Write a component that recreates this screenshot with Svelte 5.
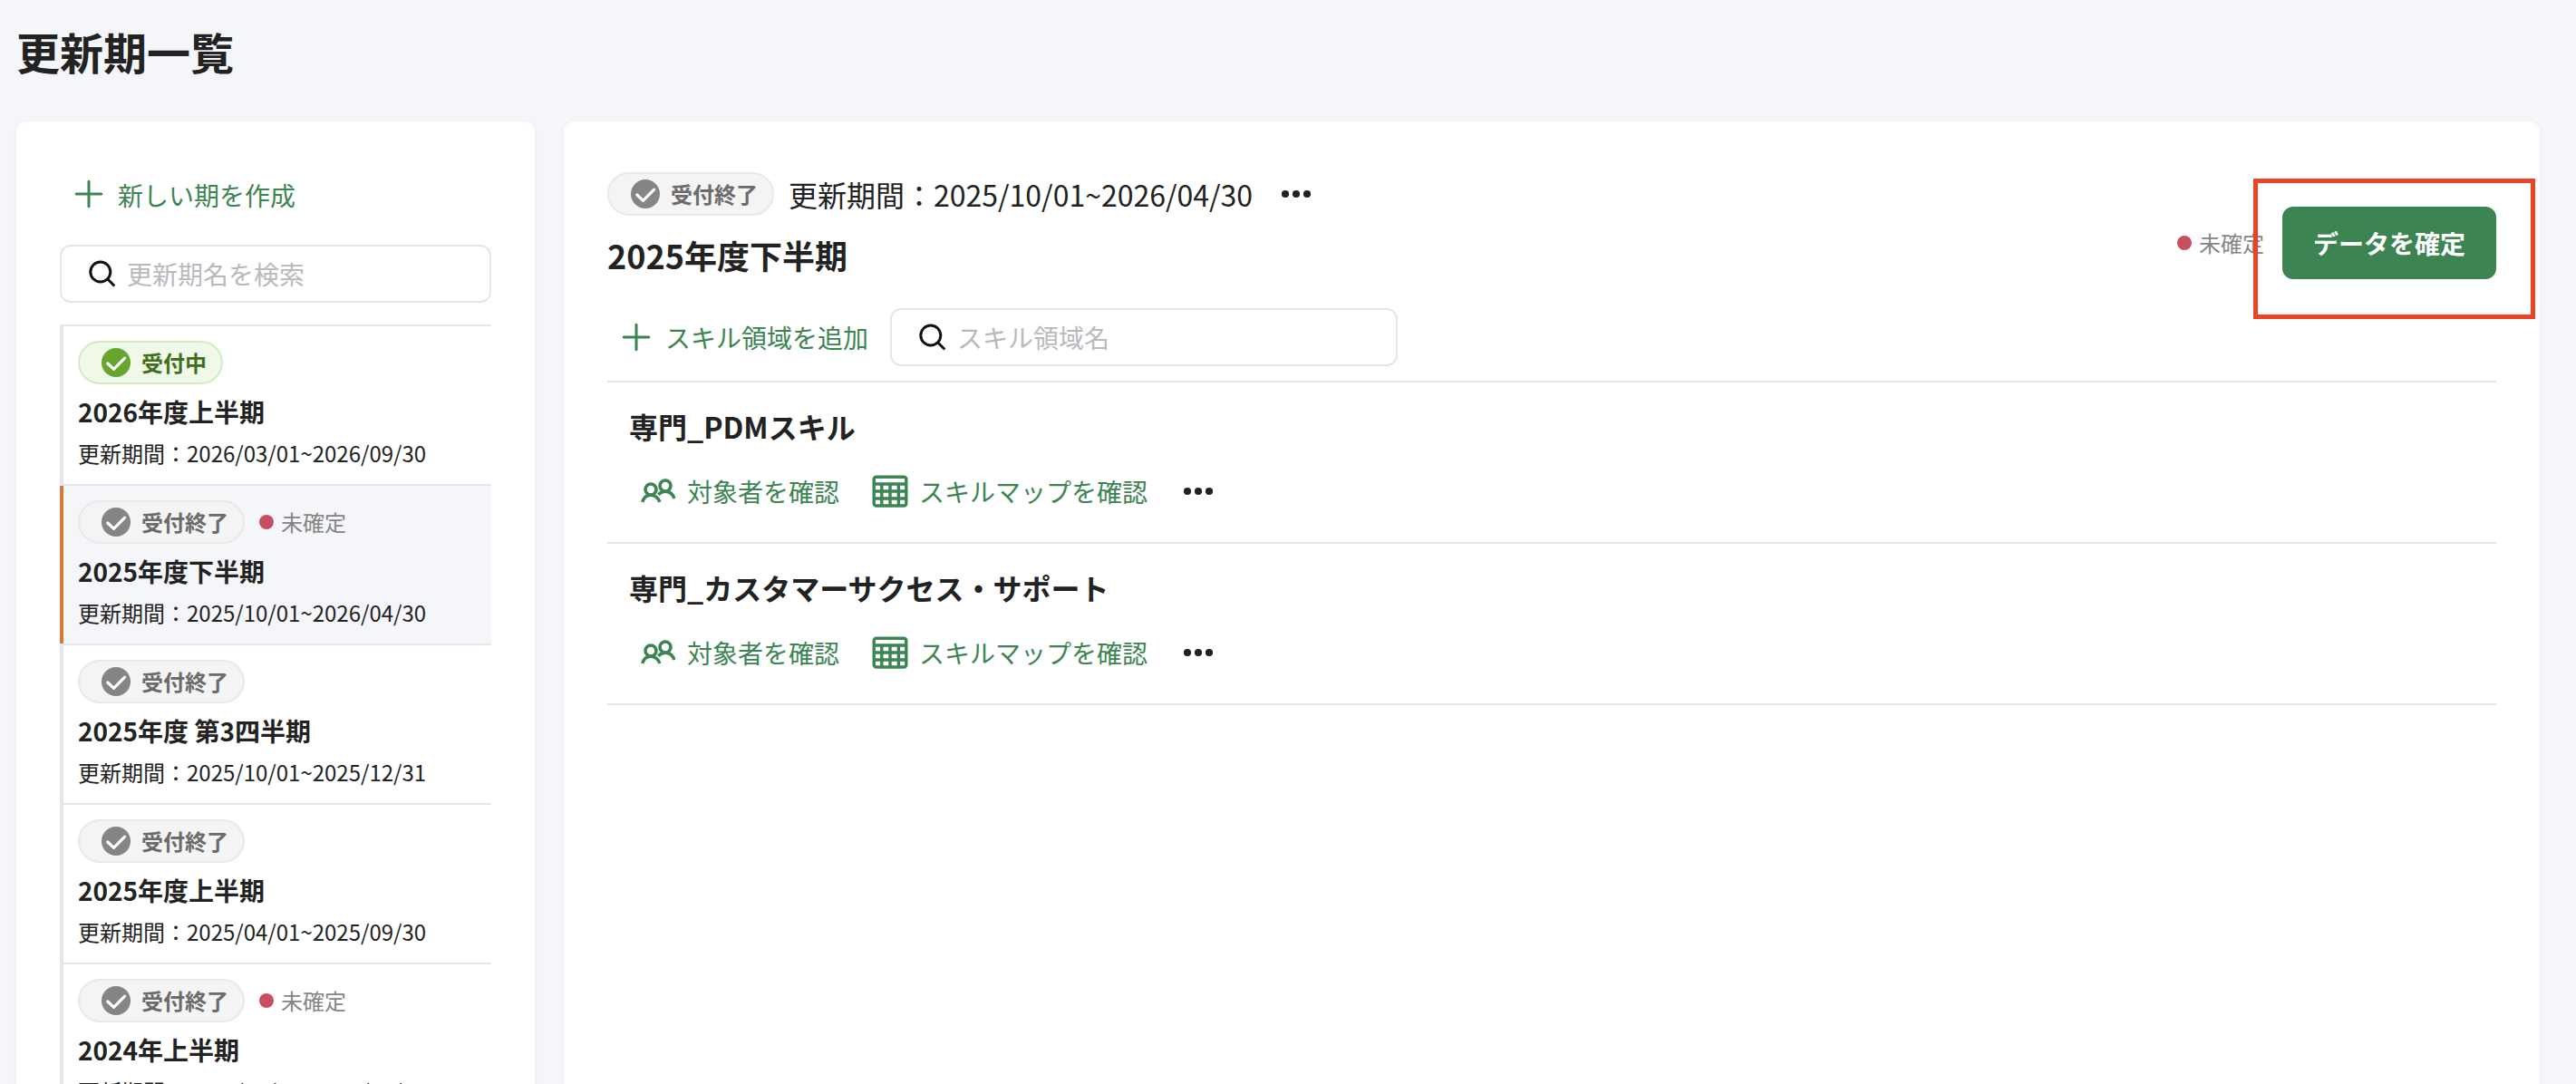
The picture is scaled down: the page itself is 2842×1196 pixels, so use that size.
<script>
  const periods = [
    { open: true, pending: false, name: '2026年度上半期', range: '2026/03/01~2026/09/30' },
    { open: false, pending: true, name: '2025年度下半期', range: '2025/10/01~2026/04/30', selected: true },
    { open: false, pending: false, name: '2025年度 第3四半期', range: '2025/10/01~2025/12/31' },
    { open: false, pending: false, name: '2025年度上半期', range: '2025/04/01~2025/09/30' },
    { open: false, pending: true, name: '2024年上半期', range: '2024/04/01~2024/09/30' }
  ];
  const current = periods[1];
  const areas = ['専門_PDMスキル', '専門_カスタマーサクセス・サポート'];
</script>

{#snippet badge(open)}
  <span class="badge" class:open>
    <svg class="check" viewBox="0 0 32 32"><circle cx="16" cy="16" r="16" /><path d="M6.8 17L13.5 23.4L25.6 11.2" /></svg>
    {open ? '受付中' : '受付終了'}
  </span>
{/snippet}

{#snippet pendingMark()}
  <span class="pending"><i></i>未確定</span>
{/snippet}

{#snippet plus()}
  <svg class="plus" viewBox="0 0 32 32"><path d="M16 2.2V29.8M2.2 16H29.8" /></svg>
{/snippet}

{#snippet magnifier()}
  <svg class="magnifier" viewBox="0 0 30 30"><circle cx="12.8" cy="13" r="11" /><path d="M20.8 21L28.3 28.5" /></svg>
{/snippet}

{#snippet dots()}
  <svg class="dots" viewBox="0 0 34 10"><circle cx="5" cy="5" r="4.1" /><circle cx="17" cy="5" r="4.1" /><circle cx="29" cy="5" r="4.1" /></svg>
{/snippet}

<div class="page">
  <h1>更新期一覧</h1>
  <div class="columns">
    <aside class="card side">
      <button class="link create">{@render plus()}<span>新しい期を作成</span></button>
      <label class="search">{@render magnifier()}<span>更新期名を検索</span></label>
      <ul class="periods">
        {#each periods as p}
          <li>
            <div class="period" class:selected={p.selected}>
              <div class="status">
                {@render badge(p.open)}
                {#if p.pending}{@render pendingMark()}{/if}
              </div>
              <h3>{p.name}</h3>
              <p>更新期間：{p.range}</p>
            </div>
          </li>
        {/each}
      </ul>
    </aside>

    <main class="card detail">
      <header>
        <div>
          <div class="meta">
            {@render badge(current.open)}
            <span class="range">更新期間：{current.range}</span>
            {@render dots()}
          </div>
          <h2>{current.name}</h2>
        </div>
        <div class="confirm">
          {@render pendingMark()}
          <div class="target">
            <button class="primary">データを確定</button>
            <span class="highlight"></span>
          </div>
        </div>
      </header>
      <div class="toolbar">
        <button class="link">{@render plus()}<span>スキル領域を追加</span></button>
        <label class="search">{@render magnifier()}<span>スキル領域名</span></label>
      </div>
      {#each areas as area}
        <section>
          <h3>{area}</h3>
          <div class="actions">
            <button class="link people">
              <svg viewBox="0 0 40 30"><circle cx="12" cy="13" r="6" /><path d="M2.8 27C4 22.3 7.5 19.2 12 19.2S20.4 22.3 21.8 27" /><circle cx="28" cy="9" r="6" /><path d="M20.3 18.8C22.3 16.6 25 15.2 28 15.2C32.8 15.2 36.4 18.3 37.8 23" /></svg>
              対象者を確認
            </button>
            <button class="link grid">
              <svg viewBox="0 0 40 36"><rect x="2.2" y="2.2" width="35.6" height="31.8" rx="2.5" /><path d="M2 10H38M2 18H38M2 26H38M10.8 10V34M20 10V34M29.4 10V34" /></svg>
              スキルマップを確認
            </button>
            {@render dots()}
          </div>
        </section>
      {/each}
    </main>
  </div>
</div>

<style>
  :global(body) {
    background: #f5f6fa;
    overflow: hidden;
  }
  * {
    box-sizing: border-box;
    margin: 0;
    padding: 0;
  }
  .page {
    height: 1196px;
    overflow: hidden;
    padding: 0 40px 0 18px;
    font-family: 'Noto Sans CJK JP', sans-serif;
    font-size: 28px;
    color: #222;
    white-space: nowrap;
  }
  h1 {
    height: 134px;
    padding-top: 20px;
    font-size: 48px;
    line-height: 72px;
  }
  .columns {
    display: flex;
    gap: 32px;
    height: 1400px;
  }
  .card {
    background: #fff;
    border-radius: 12px;
    box-shadow: 0 2px 6px rgba(40, 40, 80, 0.05);
    padding: 56px 48px;
  }
  .side {
    width: 572px;
    flex: none;
  }
  .detail {
    flex: 1;
  }
  button {
    border: 0;
    background: none;
    font: inherit;
  }
  svg {
    display: block;
    flex: none;
    fill: none;
    stroke-width: 3;
    stroke-linecap: round;
  }
  .link {
    display: flex;
    align-items: center;
    gap: 16px;
    height: 48px;
    color: #3c8452;
    padding-left: 16px;
  }
  .link svg {
    stroke: #3c8452;
  }
  .plus {
    width: 32px;
    height: 32px;
  }
  .create span {
    padding-top: 2px;
  }
  .search {
    display: flex;
    align-items: center;
    height: 64px;
    border: 2px solid #e5e6eb;
    border-radius: 12px;
    padding-left: 30px;
    gap: 12px;
    color: #b8b9bd;
  }
  .side .search {
    margin: 32px 0 24px;
  }
  .magnifier {
    width: 30px;
    height: 30px;
    stroke: #111;
    stroke-linecap: butt;
    margin-top: -1px;
  }
  .periods {
    list-style: none;
    border-top: 2px solid #e5e6eb;
  }
  li {
    border-bottom: 2px solid #e5e6eb;
  }
  .period {
    height: 174px;
    border-left: 4px solid #e5e6eb;
    padding: 16px 16px 0;
  }
  .selected {
    border-color: #d67b3e;
    background: #f5f6fa;
  }
  .status {
    display: flex;
    align-items: center;
    gap: 16px;
  }
  .badge {
    display: flex;
    align-items: center;
    gap: 12px;
    height: 48px;
    padding: 0 16px 0 24px;
    border: 2px solid #e9e9e9;
    border-radius: 24px;
    background: #f4f4f4;
    color: #6b6b6b;
    font-size: 24px;
    font-weight: 700;
    line-height: 36px;
  }
  .badge.open {
    background: #f0f8e8;
    border-color: #d4ebbf;
    color: #3f6f1c;
  }
  .check {
    width: 32px;
    height: 32px;
    stroke: #fff;
    stroke-width: 3.2;
    stroke-linejoin: round;
  }
  .check circle {
    fill: #858585;
    stroke: none;
  }
  .open .check circle {
    fill: #68a52f;
  }
  .pending {
    display: flex;
    align-items: center;
    gap: 8px;
    font-size: 24px;
    line-height: 36px;
    color: #858585;
  }
  .pending i {
    width: 16px;
    height: 16px;
    border-radius: 50%;
    background: #c94f60;
  }
  .period h3 {
    margin-top: 9px;
    font-size: 28px;
    line-height: 42px;
  }
  .period p {
    margin-top: 7px;
    font-size: 24px;
    line-height: 36px;
  }
  header {
    display: flex;
    justify-content: space-between;
    height: 150px;
  }
  .meta {
    display: flex;
    align-items: center;
    gap: 16px;
  }
  .range {
    font-size: 32px;
    line-height: 48px;
  }
  .dots {
    width: 34px;
    height: 10px;
    fill: #222;
    margin-left: 15px;
  }
  h2 {
    margin-top: 16px;
    font-size: 36px;
    line-height: 54px;
  }
  .confirm {
    display: flex;
    align-items: center;
    gap: 20px;
    height: 80px;
    margin-top: 38px;
  }
  .target {
    position: relative;
  }
  .primary {
    width: 236px;
    height: 80px;
    border-radius: 12px;
    background: #3c8452;
    color: #fff;
    font-weight: 700;
  }
  .highlight {
    position: absolute;
    left: -32px;
    top: -31px;
    width: 311px;
    height: 155px;
    border: 5px solid #ec4227;
  }
  .toolbar {
    display: flex;
    align-items: center;
    gap: 24px;
    height: 82px;
    padding-bottom: 16px;
    border-bottom: 2px solid #e5e6eb;
  }
  .toolbar .search {
    width: 560px;
  }
  section {
    height: 178px;
    padding: 24px 24px 0;
    border-bottom: 2px solid #e5e6eb;
  }
  section h3 {
    font-size: 32px;
    line-height: 48px;
  }
  .actions {
    display: flex;
    align-items: center;
    margin-top: 24px;
  }
  .people {
    padding-left: 12px;
    gap: 12px;
  }
  .people svg {
    width: 40px;
    height: 30px;
    stroke-width: 3.6;
    stroke-linecap: butt;
  }
  .grid {
    padding-left: 36px;
    gap: 12px;
  }
  .grid svg {
    width: 40px;
    height: 36px;
    stroke-width: 3.4;
    stroke-linecap: butt;
  }
  .actions .dots {
    margin-left: 39px;
  }
</style>
